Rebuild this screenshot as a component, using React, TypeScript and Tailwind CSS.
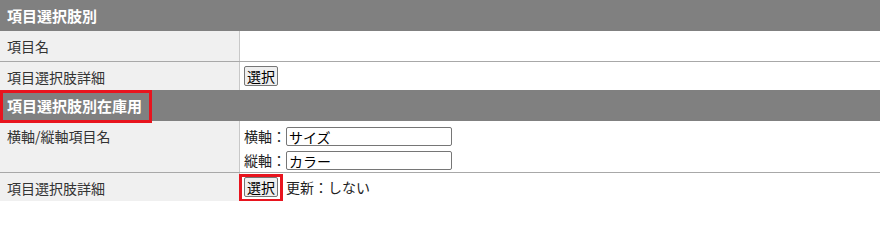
import React from 'react'

const font = { fontFamily: '"Noto Sans CJK JP", "Liberation Sans", sans-serif' }

function SectionHeader({ title, marked }: { title: string; marked?: boolean }) {
  return (
    <div className="relative h-[31px] bg-[#808080] flex items-center px-[7px]">
      <span className="text-white font-bold text-[15px] leading-none">{title}</span>
      {marked && (
        <div className="absolute left-0 top-0 w-[152px] h-[33px] border-[3px] border-[#e8141e] z-10" />
      )}
    </div>
  )
}

function Row({
  label,
  children,
  height,
  last,
}: {
  label: string
  children?: React.ReactNode
  height: string
  last?: boolean
}) {
  return (
    <div className={`flex ${height} ${last ? '' : 'border-b border-[#a8a8a8]'}`}>
      <div className="w-[240px] shrink-0 bg-[#f0f0f0] border-r border-[#c8c8c8] px-[7px] pt-[5px] text-[14px] text-[#333]">
        {label}
      </div>
      <div className="flex-1 bg-white px-[4px] text-[14px] text-[#222]">{children}</div>
    </div>
  )
}

function SelectButton() {
  return (
    <button className="h-[20px] px-[2px] bg-[#efefef] border border-[#767676] rounded-[2px] text-[14px] leading-none text-black">
      選択
    </button>
  )
}

function TextField({ value }: { value: string }) {
  return (
    <input
      readOnly
      value={value}
      className="w-[166px] h-[19px] border border-[#767676] rounded-[2px] px-[2px] text-[14px] leading-none text-black bg-white"
      style={font}
    />
  )
}

export default function App() {
  return (
    <div className="w-[880px] bg-white" style={font}>
      <SectionHeader title="項目選択肢別" />
      <Row label="項目名" height="h-[31px]" />
      <Row label="項目選択肢詳細" height="h-[28px]" last>
        <div className="pt-[4px]">
          <SelectButton />
        </div>
      </Row>
      <SectionHeader title="項目選択肢別在庫用" marked />
      <Row label="横軸/縦軸項目名" height="h-[52px]">
        <div className="pt-[5px] flex flex-col gap-[3px]">
          <div className="flex items-center">
            <span>横軸：</span>
            <TextField value="サイズ" />
          </div>
          <div className="flex items-center">
            <span>縦軸：</span>
            <TextField value="カラー" />
          </div>
        </div>
      </Row>
      <Row label="項目選択肢詳細" height="h-[28px]" last>
        <div className="pt-[4px] flex items-center">
          <div className="relative">
            <SelectButton />
            <div className="absolute -left-[5px] -top-[3px] w-[44px] h-[28px] border-[3px] border-[#e8141e]" />
          </div>
          <span className="ml-[8px]">更新：しない</span>
        </div>
      </Row>
    </div>
  )
}
